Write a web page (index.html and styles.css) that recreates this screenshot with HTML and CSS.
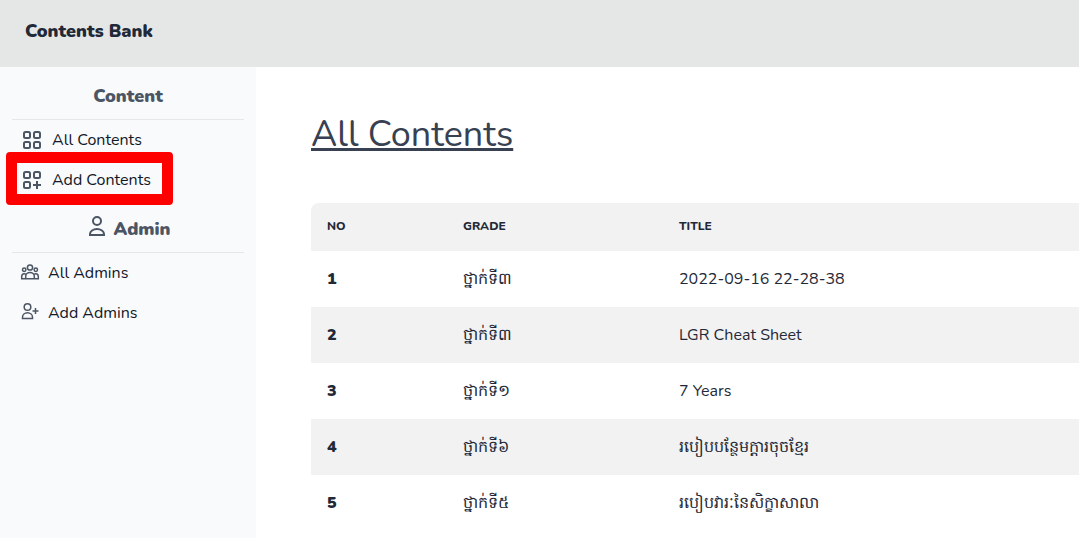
FILE: index.html
```html
<!DOCTYPE html>
<html lang="en">
<head>
<meta charset="utf-8">
<title>Contents Bank</title>
<link rel="stylesheet" href="styles.css">
</head>
<body>
<header class="topbar"><a class="brand" href="#">Contents Bank</a></header>
<div class="shell">
  <aside class="sidebar">
    <h2 class="group-title">Content</h2>
    <nav class="group">
      <a class="item" href="#"><svg class="icon" viewBox="0 0 24 24"><rect x="4" y="4" width="6" height="6" rx="1.5"/><rect x="14" y="4" width="6" height="6" rx="1.5"/><rect x="4" y="14" width="6" height="6" rx="1.5"/><rect x="14" y="14" width="6" height="6" rx="1.5"/></svg>All Contents</a>
      <a class="item marked" href="#"><svg class="icon" viewBox="0 0 24 24"><rect x="4" y="4" width="6" height="6" rx="1.5"/><rect x="14" y="4" width="6" height="6" rx="1.5"/><rect x="4" y="14" width="6" height="6" rx="1.5"/><path d="M17 13v8M13 17h8"/></svg>Add Contents</a>
    </nav>
    <h2 class="group-title">
      <svg class="icon raised" viewBox="0 0 24 24"><circle cx="12" cy="6" r="4"/><path d="M5 20v-1a7 5 0 0 1 14 0v1z"/></svg>Admin</h2>
    <nav class="group people">
      <a class="item" href="#"><svg class="icon small" viewBox="0 0 20 20"><circle cx="10" cy="5.500" r="2.600"/><circle cx="4.200" cy="7.800" r="1.700"/><circle cx="15.800" cy="7.800" r="1.700"/><path d="M5.700 16.800v-2.500a4.300 3.800 0 0 1 8.600 0v2.500zM5.700 16.800H1.700v-2.500a2.600 2.600 0 0 1 4-2.200M14.300 16.800h4v-2.500a2.600 2.600 0 0 0-4-2.200"/></svg>All Admins</a>
      <a class="item" href="#"><svg class="icon small" viewBox="0 0 20 20"><circle cx="7.500" cy="5" r="3.300"/><path d="M2.500 16.500v-1.200a5 4.500 0 0 1 10 0v1.200zM15.500 6v6M12.500 9h6"/></svg>Add Admins</a>
    </nav>
  </aside>
  <main class="main">
    <h1 class="page-title">All Contents</h1>
    <table class="table">
      <colgroup><col class="col-no"><col class="col-grade"><col></colgroup>
      <thead><tr><th>No</th><th>Grade</th><th>Title</th></tr></thead>
      <tbody>
        <tr><th>1</th><td>ថ្នាក់ទី៣</td><td>2022-09-16 22-28-38</td></tr>
        <tr><th>2</th><td>ថ្នាក់ទី៣</td><td>LGR Cheat Sheet</td></tr>
        <tr><th>3</th><td>ថ្នាក់ទី១</td><td>7 Years</td></tr>
        <tr><th>4</th><td>ថ្នាក់ទី៦</td><td>របៀបបន្ថែមក្តារចុចខ្មែរ</td></tr>
        <tr><th>5</th><td>ថ្នាក់ទី៥</td><td>របៀបវារៈនៃសិក្ខាសាលា</td></tr>
      </tbody>
    </table>
  </main>
</div>
</body>
</html>
```
FILE: styles.css
```css
*, *::after { box-sizing: border-box; }
body { margin: 0; font: 16px/24px Nunito, "Noto Sans", sans-serif; color: #1f2937; background: #fff; }
.topbar { display: flex; padding: 17px 25px 22px; line-height: 28px; background: #e5e7e6; }
.brand { font-size: 18px; font-weight: 900; color: #1f2937; text-decoration: none; }
.shell { display: flex; min-height: calc(100vh - 67px); }
.sidebar { flex: 0 0 256px; padding: 0 12px; background: #f9fafc; }
.group-title { display: flex; justify-content: center; align-items: center; gap: 4px; margin: 0; padding: 15px 0 9px; font-size: 18px; line-height: 28px; font-weight: 900; color: #4b5563; border-bottom: 1px solid #e5e7eb; }
.item { display: flex; align-items: center; gap: 8px; padding: 8px; color: #111827; text-decoration: none; }
.marked { position: relative; }
.marked::after { content: ""; position: absolute; top: -8px; left: -6px; width: 167px; height: 53px; border: 11px solid #f00; border-radius: 4px; pointer-events: none; }
.icon { flex: none; width: 24px; height: 24px; fill: none; stroke: #4b5563; stroke-width: 2; }
.raised { margin-bottom: 4px; }
.small { width: 20px; height: 20px; margin-bottom: 2px; stroke-width: 1.5; }
.main { flex: 1; min-width: 0; padding: 44px 0 0 55px; }
.page-title { margin: 0 0 44px; font-size: 36px; line-height: 48px; font-weight: 400; text-decoration: underline; color: #374151; }
.table { width: 100%; border-collapse: collapse; table-layout: fixed; text-align: left; }
.table th, .table td { padding: 16px; }
.table th { font-weight: 900; }
.table thead th { padding: 15px 16px 17px; font-size: 12px; line-height: 16px; font-weight: 800; text-transform: uppercase; background: #f2f2f2; }
.table thead th:first-child { border-top-left-radius: 8px; }
.table tbody tr:nth-child(even) { background: #f2f2f2; }
.col-no { width: 136px; }
.col-grade { width: 216px; }
```
